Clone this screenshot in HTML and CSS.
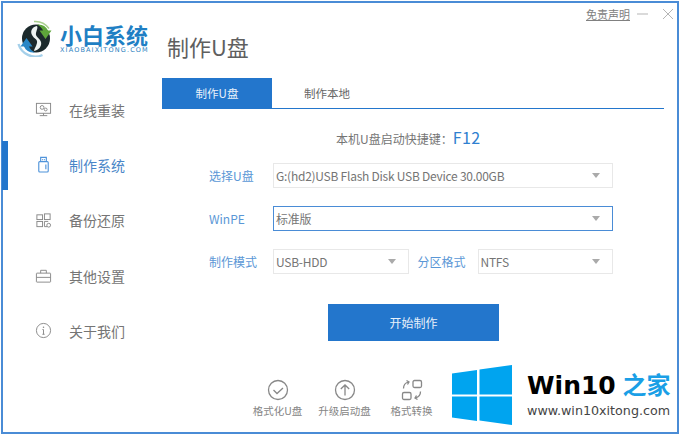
FILE: index.html
```html
<!DOCTYPE html>
<html lang="zh">
<head>
<meta charset="utf-8">
<title>制作U盘</title>
<link rel="stylesheet" href="styles.css">
</head>
<body>
<div class="window">
  <aside class="sidebar">
    <div class="brand">
      <svg class="brand-logo" viewBox="0 0 37 37" width="37" height="37">
        <path d="M17 1.500a17 17 0 0 1 15 7" fill="none" stroke="#a9cf8e" stroke-width="1.400"/>
        <path d="M1.500 24a17.500 17.500 0 0 0 24 11" fill="none" stroke="#a5d0ea" stroke-width="2.400"/>
        <circle cx="19" cy="18.500" r="14" fill="#1c2a2c"/>
        <path d="M20 6c-5 1-7 5-5 9s6 4 5 8-3 6-3 8c5-1 8-5 7-9s-6-5-5-9 2-5 1-7z" fill="#eef4f2"/>
        <path d="M20 4.500c5-.5 9 1.500 11 6h3.500L28.500 19l-6-8.500h3.500c-1-2.500-3-4.500-6-6z" fill="#5ea63a"/>
        <path d="M18 32.500c-5 .5-9-1.500-11-6H3.500L9.500 18l6 8.500H12c1 2.500 3 4.500 6 6z" fill="#2a87c6"/>
      </svg>
      <div class="brand-text">
        <div class="brand-name">小白系统</div>
        <div class="brand-url">XIAOBAIXITONG.COM</div>
      </div>
    </div>
    <nav class="nav">
      <a class="nav-item">
        <svg class="nav-icon" viewBox="0 0 18 18"><rect x="1.500" y="2.500" width="15" height="10.500"/><path d="M9 13v2.500M5 15.500h8"/><circle cx="7.500" cy="6.800" r="2"/><circle cx="11.300" cy="9" r="1.500"/></svg>
        <span>在线重装</span>
      </a>
      <a class="nav-item active">
        <svg class="nav-icon" viewBox="0 0 18 18"><rect x="4" y="6" width="10" height="11" rx="1"/><path d="M6 6V1.500h6V6M8 3.500v1M10 3.500v1M11.500 9v5"/></svg>
        <span>制作系统</span>
      </a>
      <a class="nav-item">
        <svg class="nav-icon" viewBox="0 0 18 18"><rect x="2" y="3" width="6" height="5"/><rect x="10" y="2" width="6" height="6"/><rect x="2" y="10" width="6" height="5.500"/><path d="M10 10h4M10 10v5.500h3"/><circle cx="14.500" cy="14" r="2"/></svg>
        <span>备份还原</span>
      </a>
      <a class="nav-item">
        <svg class="nav-icon" viewBox="0 0 18 18"><rect x="1.500" y="6.500" width="15" height="9.500" rx=".5"/><path d="M6 6.500V3.500h6v3M1.500 11h15"/></svg>
        <span>其他设置</span>
      </a>
      <a class="nav-item">
        <svg class="nav-icon" viewBox="0 0 18 18"><circle cx="9" cy="9" r="7.500"/><path d="M9 8v5M7.800 13h2.400M7.800 8H9"/><circle class="dot" cx="9" cy="5.500" r=".8"/></svg>
        <span>关于我们</span>
      </a>
    </nav>
  </aside>

  <main class="main">
    <div class="topbar">
      <a class="disclaimer">免责声明</a>
      <svg class="win-ctl" viewBox="0 0 14 14" width="14" height="14"><path d="M1 7h11"/></svg>
      <svg class="win-ctl" viewBox="0 0 14 14" width="14" height="14"><path d="M2 2l10 10M12 2L2 12"/></svg>
    </div>
    <h1 class="title">制作U盘</h1>
    <div class="tabs">
      <a class="tab selected">制作U盘</a>
      <a class="tab">制作本地</a>
    </div>
    <section class="pane">
      <p class="hotkey">本机U盘启动快捷键：<b>F12</b></p>
      <div class="form">
        <div class="row">
          <label class="label">选择U盘</label>
          <div class="select"><span>G:(hd2)USB Flash Disk USB Device 30.00GB</span><i class="caret"></i></div>
        </div>
        <div class="row">
          <label class="label">WinPE</label>
          <div class="select focus"><span>标准版</span><i class="caret"></i></div>
        </div>
        <div class="row">
          <label class="label">制作模式</label>
          <div class="select"><span>USB-HDD</span><i class="caret"></i></div>
          <label class="label inner">分区格式</label>
          <div class="select"><span>NTFS</span><i class="caret"></i></div>
        </div>
      </div>
      <button class="start">开始制作</button>
      <div class="tools">
        <a class="tool">
          <svg viewBox="0 0 22 22" width="22" height="22"><circle cx="11" cy="11" r="9.500"/><path d="M6.500 11l3.500 3.500 6-5.500"/></svg>
          <span>格式化U盘</span>
        </a>
        <a class="tool">
          <svg viewBox="0 0 22 22" width="22" height="22"><circle cx="11" cy="11" r="9.500"/><path d="M11 16.500V6M6.800 10L11 6l4.200 4"/></svg>
          <span>升级启动盘</span>
        </a>
        <a class="tool">
          <svg viewBox="0 0 22 22" width="22" height="22"><rect x="12" y="1.500" width="8.500" height="7" rx="1.500"/><rect x="1.500" y="13.500" width="8.500" height="7" rx="1.500"/><path d="M2.500 9.500c0-3 1.500-5.500 5-6.500M5.500 1.500L8 3 6.500 5.500M19.500 12.500c0 3-1.500 5.500-5 6.500M16.500 20.500L14 19l1.500-2.500"/></svg>
          <span>格式转换</span>
        </a>
      </div>
    </section>
  </main>

  <div class="watermark">
    <svg class="wm-logo" viewBox="0 0 60 60" width="60" height="60">
      <path d="M0 8.500l25-3.500v24.500H0zM27.500 4.500L60 0v29.500H27.500zM0 31.500h25V56L0 52.500zM27.500 31.500H60V60l-32.500-4.500z" fill="#00a4ef"/>
    </svg>
    <div class="wm-text">
      <div class="wm-name">Win10 <span>之家</span></div>
      <div class="wm-url">www.win10xitong.com</div>
    </div>
  </div>
</div>
</body>
</html>
```
FILE: styles.css
```css
* { box-sizing: border-box; }
html, body { margin: 0; padding: 0; background: #fff; }
body {
  width: 682px;
  height: 436px;
  overflow: hidden;
  padding: 1px 0 0 1px;
  font-family: "Noto Sans CJK SC", "Noto Sans", sans-serif;
  color: #666;
}
.window {
  position: relative;
  display: flex;
  width: 678px;
  height: 433px;
  border: 2px solid #4a8cd6;
  background: #fff;
}
.sidebar { width: 159px; flex: none; display: flex; flex-direction: column; }
.brand { display: flex; align-items: flex-start; height: 79px; padding: 17px 0 0 14px; gap: 6px; }
.brand-logo { flex: none; }
.brand-text { padding-top: 3px; }
.brand-name {
  font-size: 22px;
  line-height: 22px;
  font-weight: 700;
  color: #1f7fc4;
}
.brand-url {
  margin-top: 1px;
  font-family: "DejaVu Sans", sans-serif;
  font-size: 6.500px;
  line-height: 9px;
  letter-spacing: 1.150px;
  color: #2b7fc0;
  white-space: nowrap;
}
.nav { display: flex; flex-direction: column; }
.nav-item {
  position: relative;
  display: flex;
  align-items: center;
  height: 55.300px;
  padding-left: 32px;
  gap: 17px;
  font-size: 14px;
  color: #757575;
}
.nav-item.active { color: #4a86c8; }
.nav-item.active::before {
  content: "";
  position: absolute;
  left: -1px;
  top: 4px;
  width: 6px;
  height: 49px;
  background: #2376cc;
}
.nav-icon { width: 17px; height: 17px; fill: none; stroke: #888; stroke-width: 1; }
.active .nav-icon { stroke: #4f93da; stroke-width: 1.200; }
.nav-icon .dot { fill: #888; stroke: none; }
.main { flex: 1; display: flex; flex-direction: column; min-width: 0; }
.topbar {
  display: flex;
  align-items: center;
  justify-content: flex-end;
  height: 21px;
  padding-right: 2px;
  gap: 11px;
}
.disclaimer { font-size: 11px; color: #808080; text-decoration: underline; margin-right: -5px; }
.win-ctl { fill: none; stroke: #b5b5b5; stroke-width: 1; }
.title {
  margin: 0;
  height: 54px;
  padding-left: 5px;
  font-size: 22px;
  line-height: 44px;
  font-weight: 400;
  color: #5f5f5f;
}
.tabs {
  display: flex;
  width: 502px;
  height: 31px;
  border-bottom: 1px solid #2376cc;
}
.tab {
  width: 110px;
  display: flex;
  align-items: center;
  justify-content: center;
  font-size: 11.500px;
  color: #666;
}
.tab.selected { background: #2376cc; color: #e8f1fa; }
.pane { display: flex; flex-direction: column; padding-left: 47px; }
.hotkey {
  margin: 16px 0 0;
  height: 24px;
  padding-left: 127px;
  font-size: 12px;
  line-height: 24px;
  color: #757575;
}
.hotkey b { font-size: 16px; font-weight: 400; color: #2f80d0; letter-spacing: .5px; }
.form { display: flex; flex-direction: column; gap: 18px; margin-top: 14px; width: 404px; }
.row { display: flex; align-items: center; }
.label { width: 64px; flex: none; font-size: 12px; color: #5a97d6; }
.label.inner { width: 69px; padding-left: 9px; }
.select {
  flex: 1;
  display: flex;
  align-items: center;
  justify-content: space-between;
  height: 25px;
  padding: 0 12px 0 2px;
  border: 1px solid #e8e8e8;
  font-size: 12px;
  color: #757575;
  letter-spacing: -.25px;
}
.select.focus { border-color: #4a8cd6; }
.caret {
  width: 0;
  height: 0;
  border-left: 4px solid transparent;
  border-right: 4px solid transparent;
  border-top: 5px solid #aaa;
}
.start {
  align-self: flex-start;
  margin: 30px 0 0 119px;
  width: 171px;
  height: 37px;
  border: 0;
  background: #2376cc;
  color: #e8f1fa;
  font: inherit;
  font-size: 12px;
}
.tools { display: flex; margin: 38px 0 0 35px; }
.tool {
  width: 67px;
  display: flex;
  flex-direction: column;
  align-items: center;
  gap: 3px;
  font-size: 10.500px;
  line-height: 14px;
  color: #858585;
  white-space: nowrap;
}
.tool svg { fill: none; stroke: #888; stroke-width: 1.300; }
.watermark {
  position: absolute;
  left: 449px;
  top: 362px;
  display: flex;
  gap: 15px;
  background: #fff;
}
.wm-logo { flex: none; }
.wm-text { padding-top: 4px; }
.wm-name {
  font-family: "DejaVu Sans", sans-serif;
  font-size: 25px;
  line-height: 30px;
  font-weight: 700;
  color: #000;
  white-space: nowrap;
  word-spacing: -2px;
}
.wm-name span { font-family: "Noto Sans CJK SC", sans-serif; font-size: 24px; color: #1a9fe6; }
.wm-url {
  font-family: "DejaVu Sans", sans-serif;
  font-size: 12.700px;
  line-height: 20px;
  color: #444;
  white-space: nowrap;
}
```
